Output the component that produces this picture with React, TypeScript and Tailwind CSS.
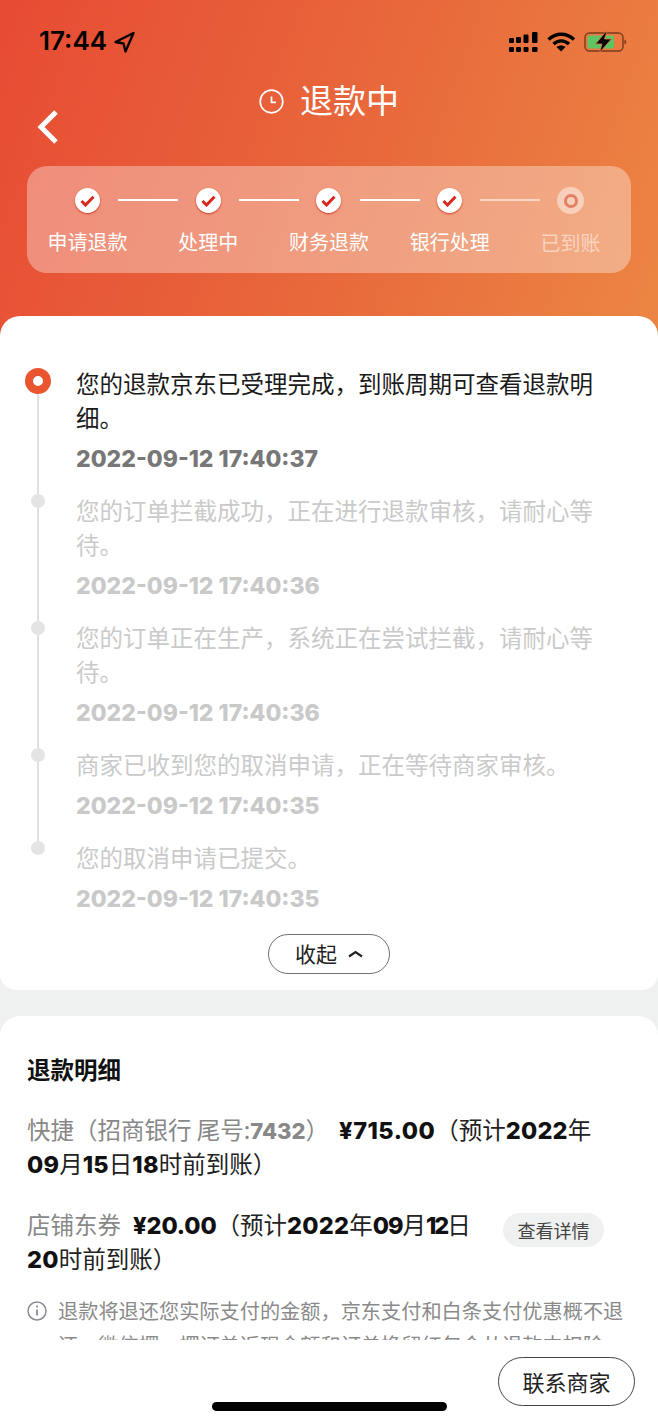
const CJK = "font-['Noto_Sans_CJK_SC',sans-serif]";
const NUM = "font-['Inter','Noto_Sans_CJK_SC',sans-serif] font-[850]";

const STEPS = [
  { label: '申请退款', done: true },
  { label: '处理中', done: true },
  { label: '财务退款', done: true },
  { label: '银行处理', done: true },
  { label: '已到账', done: false },
];

const LOGS = [
  { text: '您的退款京东已受理完成，到账周期可查看退款明细。', time: '2022-09-12 17:40:37', active: true },
  { text: '您的订单拦截成功，正在进行退款审核，请耐心等待。', time: '2022-09-12 17:40:36' },
  { text: '您的订单正在生产，系统正在尝试拦截，请耐心等待。', time: '2022-09-12 17:40:36' },
  { text: '商家已收到您的取消申请，正在等待商家审核。', time: '2022-09-12 17:40:35' },
  { text: '您的取消申请已提交。', time: '2022-09-12 17:40:35', last: true },
];

function StatusBar() {
  return (
    <div className="flex h-[82px] items-start justify-between pl-[39px] pr-[31px] pt-[27px]">
      <div className="flex items-start gap-[7px]">
        <span className="font-['Inter',sans-serif] text-[26px] leading-[28px] font-semibold text-black">17:44</span>
        <svg width="21" height="22" viewBox="0 0 21 22" fill="none" className="mt-[4px]">
          <path d="M19.500 2 1.500 11 9.500 12.500 11.500 20.500z" stroke="#000" strokeWidth="2.300" strokeLinejoin="round" />
        </svg>
      </div>
      <svg width="118" height="24" viewBox="510 31 118 24" className="mt-[4px]">
        <g fill="#000">
          <rect x="510" y="38" width="5" height="5" rx="1.2" />
          <rect x="517" y="37" width="5" height="6" rx="1.2" />
          <rect x="524.5" y="34.5" width="5" height="8.5" rx="1.2" />
          <rect x="533" y="32" width="5.5" height="11" rx="1.2" />
          <rect x="510" y="47" width="5" height="5" rx="1.2" />
          <rect x="517" y="47" width="5" height="5" rx="1.2" />
          <rect x="524.5" y="47" width="5" height="5" rx="1.2" />
          <rect x="533" y="47" width="5.5" height="5" rx="1.2" />
        </g>
        <g fill="none" stroke="#000" strokeWidth="3.4">
          <path d="M549.5 39.5c7.5-7 18-7 25.500 0" />
          <path d="M554.500 44c4.800-4.200 10.700-4.200 15.500 0" />
        </g>
        <path d="M562 51.500 557.500 47c2.700-2 6.300-2 9 0z" fill="#000" />
        <rect x="586" y="33" width="38" height="18" rx="4.500" fill="none" stroke="#7a3a1c" strokeWidth="1.400" />
        <rect x="588.500" y="35.500" width="26.500" height="13" rx="2" fill="#5fc463" />
        <path d="M625.500 39.500c1.200.4 1.800 1.300 1.800 2.500s-.6 2.100-1.800 2.500z" fill="#7a3a1c" />
        <path d="M607 31.500 596.500 44h6.500l-2.500 8.500 12-13.500h-7l2.500-7.500z" fill="#000" stroke="#e97a3f" strokeWidth=".8" />
      </svg>
    </div>
  );
}

function TitleRow() {
  return (
    <div className="relative h-[84px]">
      <div className="flex h-[38px] items-center justify-center gap-[16px]">
        <svg width="25" height="25" viewBox="0 0 25 25" fill="none" stroke="#fff" strokeWidth="1.700">
          <circle cx="12.500" cy="12.500" r="11.300" />
          <path d="M12.500 7.500v5.800h4.500" />
        </svg>
        <span className="-translate-y-[2px] text-[33px] leading-[38px] text-white">退款中</span>
      </div>
      <svg width="24" height="36" viewBox="0 0 24 36" fill="none" className="absolute left-[36px] top-[27px]">
        <path d="M20 3 5 18l15 15" stroke="#fff" strokeWidth="5" />
      </svg>
    </div>
  );
}

function StepCard() {
  return (
    <div className="mx-[27px] grid h-[107px] grid-cols-5 rounded-[20px] bg-white/35 pt-[22px]">
      {STEPS.map((step, i) => (
        <div key={step.label} className="relative flex flex-col items-center">
          {step.done ? (
            <div className="flex h-[25px] w-[25px] items-center justify-center rounded-full bg-white shadow-[0_1px_2px_rgba(200,40,20,0.8)]">
              <svg width="15" height="12" viewBox="0 0 15 12" fill="none">
                <path d="M1.500 6 5.500 10 13.500 1.800" stroke="#d9281c" strokeWidth="3" />
              </svg>
            </div>
          ) : (
            <div className="flex h-[27px] w-[27px] -translate-y-[1px] items-center justify-center rounded-full bg-white/45">
              <div className="h-[14px] w-[14px] rounded-full border-[3px] border-[#e27f64]" />
            </div>
          )}
          {i < 4 && (
            <div className={`absolute left-[91px] top-[11px] h-[2px] w-[60px] ${i === 3 ? 'bg-white/55' : 'bg-white'}`} />
          )}
          <span className={`mt-[15px] text-[20px] leading-[28px] ${step.done ? 'text-white' : '-translate-y-[1px] text-white/50'}`}>
            {step.label}
          </span>
        </div>
      ))}
    </div>
  );
}

function Timeline() {
  return (
    <div className="relative z-10 -mt-[24px] rounded-t-[20px] rounded-b-[16px] bg-white pb-[16px] pt-[50px]">
      {LOGS.map((log) => (
        <div key={log.text} className={`relative pl-[76px] pr-[49px] ${log.last ? 'pb-[18px]' : 'pb-[17px]'}`}>
          {!log.last && <div className="absolute bottom-[-1px] left-[37px] top-[8px] w-[2px] bg-[#dfdfe4]" />}
          {log.active ? (
            <div className="absolute left-[25px] top-[2px] h-[26px] w-[26px] rounded-full border-[8px] border-[#e8552e] bg-white" />
          ) : (
            <div className="absolute left-[31px] top-[1px] h-[14px] w-[14px] rounded-full bg-[#e4e4e6]" />
          )}
          <p className={`text-[23.500px] leading-[34px] ${log.active ? 'text-[#1a1a1a]' : 'text-[#cacaca]'}`}>{log.text}</p>
          <p className={`mt-[8px] whitespace-nowrap text-[23px] leading-[34px] ${NUM} ${log.active ? 'text-[#777777]' : 'text-[#c9c9c9]'}`}>
            {log.time}
          </p>
        </div>
      ))}
      <div className="flex justify-center">
        <button className="flex h-[40px] w-[122px] items-center justify-center gap-[11px] rounded-full border-[1.500px] border-[#707070] text-[21px] text-[#222222]">
          收起
          <svg width="15" height="8" viewBox="0 0 15 8" fill="none">
            <path d="M1 6.500 7.500 2 14 6.500" stroke="#222" strokeWidth="2.200" />
          </svg>
        </button>
      </div>
    </div>
  );
}

function Num({ children, className = 'tracking-[0.2px]' }: { children: string; className?: string }) {
  return <span className={`${NUM} leading-none text-[#111111] ${className}`}>{children}</span>;
}

function RefundDetail() {
  return (
    <div className="mt-[26px] rounded-t-[20px] bg-white px-[27px] pt-[36px]">
      <h2 className="text-[23.500px] leading-[34px] font-semibold text-[#111111]">退款明细</h2>
      <p className="mt-[26px] text-[23.500px] leading-[34px] text-[#222222]">
        <span className="text-[#888888]">
          快捷（招商银行 尾号:<span className={`${NUM} text-[22px] leading-none`}>7432</span>）
        </span>
        <span className="inline-block w-[10px]" />
        <Num className="tracking-[0.5px]">¥715.00</Num>（预计<Num>2022</Num>年<br />
        <Num>09</Num>月<Num>15</Num>日<Num>18</Num>时前到账）
      </p>
      <div className="mt-[27px] flex items-start justify-between pr-[27px]">
        <p className="text-[23.500px] leading-[34px] text-[#222222]">
          <span className="text-[#888888]">店铺东券</span>
          <span className="inline-block w-[12px]" />
          <Num className="tracking-[-0.1px]">¥20.00</Num>（预计<Num>2022</Num>年<Num className="tracking-[-1px]">09</Num>月<Num className="tracking-[-2px]">12</Num>日<br />
          <Num>20</Num>时前到账）
        </p>
        <span className="mt-[6px] flex h-[34px] w-[101px] shrink-0 items-center justify-center rounded-full bg-[#eff1f0] text-[18px] text-[#444444]">
          查看详情
        </span>
      </div>
      <div className="mt-[19px] flex gap-[11px]">
        <svg width="20" height="20" viewBox="0 0 20 20" fill="none" className="mt-[7px] shrink-0">
          <circle cx="10" cy="10" r="9" stroke="#8a8a94" strokeWidth="1.500" />
          <path d="M10 8.500v6" stroke="#8a8a94" strokeWidth="1.800" />
          <circle cx="10" cy="5.500" r="1.100" fill="#8a8a94" />
        </svg>
        <p className="h-[46px] overflow-hidden text-[20.200px] leading-[34px] text-[#8a8a8a]">
          退款将退还您实际支付的金额，京东支付和白条支付优惠概不退还。微信摆一摆订单返现金额和订单换留红包会从退款中扣除。
        </p>
      </div>
    </div>
  );
}

export default function App() {
  return (
    <div className={`relative h-[1424px] w-[658px] overflow-hidden bg-[#eff1f0] ${CJK}`}>
      <div className="h-[340px] bg-[linear-gradient(110deg,#e74b33_0%,#e8663b_50%,#ec8643_100%)]">
        <StatusBar />
        <TitleRow />
        <StepCard />
      </div>
      <Timeline />
      <RefundDetail />
      <div className="absolute inset-x-0 bottom-0 z-20 h-[84px] bg-white">
        <button className="absolute left-[498px] top-[17px] h-[49px] w-[137px] rounded-full border border-[#444444] bg-white text-[22px] text-[#222222]">
          联系商家
        </button>
        <div className="absolute left-[212px] top-[62px] h-[9px] w-[235px] rounded-full bg-black" />
      </div>
    </div>
  );
}
